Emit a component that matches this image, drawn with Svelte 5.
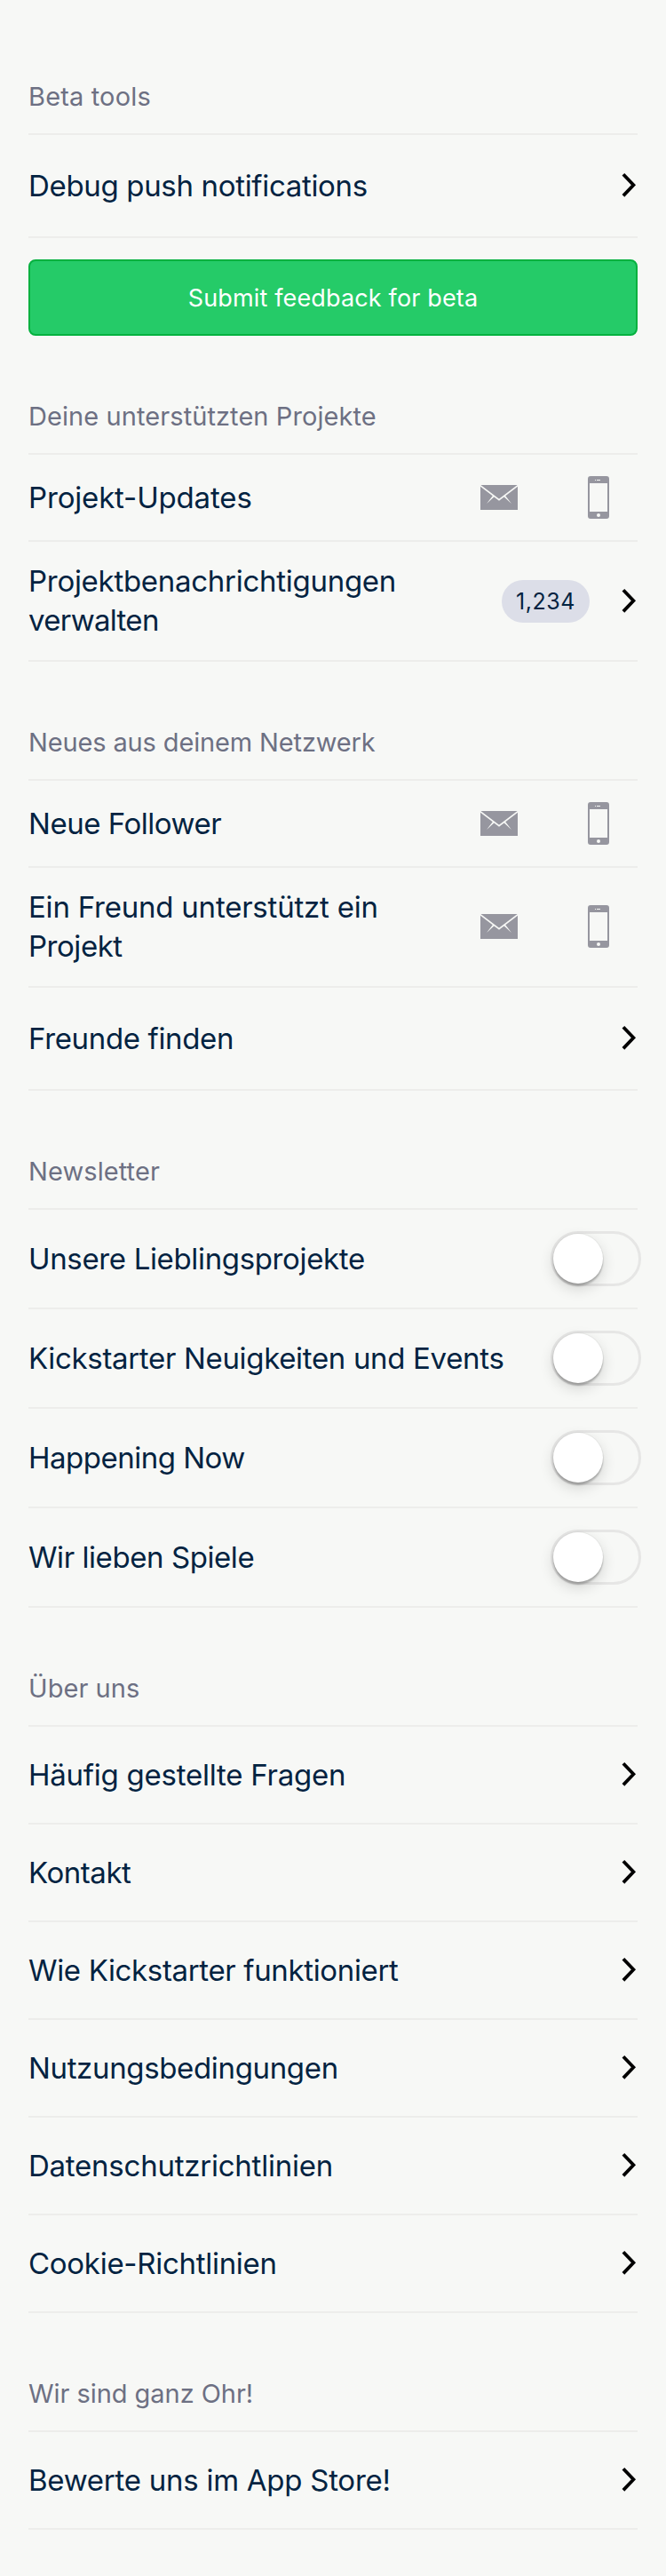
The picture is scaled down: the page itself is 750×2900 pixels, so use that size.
<script>
  // Each row carries its label lines as [text, letter spacing in px].
  const sections = [
    {
      title: ['Beta tools', 0.16],
      rows: [{ lines: [['Debug push notifications', -0.33]], kind: 'link', height: 116 }],
      button: 'Submit feedback for beta'
    },
    {
      title: ['Deine unterstützten Projekte', 0.08],
      rows: [
        { lines: [['Projekt-Updates', -0.16]], kind: 'channels', height: 98 },
        {
          lines: [['Projektbenachrichtigungen', -0.28], ['verwalten', -0.71]],
          kind: 'link',
          count: '1,234',
          height: 135
        }
      ]
    },
    {
      title: ['Neues aus deinem Netzwerk', -0.14],
      rows: [
        { lines: [['Neue Follower', -0.48]], kind: 'channels', height: 98 },
        {
          lines: [['Ein Freund unterstützt ein', -0.22], ['Projekt', -0.46]],
          kind: 'channels',
          height: 135
        },
        { lines: [['Freunde finden', -0.35]], kind: 'link', height: 116 }
      ]
    },
    {
      title: ['Newsletter', 0.09],
      rows: [
        { lines: [['Unsere Lieblingsprojekte', -0.35]], kind: 'toggle', height: 112 },
        { lines: [['Kickstarter Neuigkeiten und Events', -0.33]], kind: 'toggle', height: 112 },
        { lines: [['Happening Now', -0.5]], kind: 'toggle', height: 112 },
        { lines: [['Wir lieben Spiele', -0.43]], kind: 'toggle', height: 112 }
      ]
    },
    {
      title: ['Über uns', 0.06],
      rows: [
        { lines: [['Häufig gestellte Fragen', -0.24]], kind: 'link', height: 110 },
        { lines: [['Kontakt', -0.45]], kind: 'link', height: 110 },
        { lines: [['Wie Kickstarter funktioniert', -0.35]], kind: 'link', height: 110 },
        { lines: [['Nutzungsbedingungen', -0.35]], kind: 'link', height: 110 },
        { lines: [['Datenschutzrichtlinien', -0.24]], kind: 'link', height: 110 },
        { lines: [['Cookie-Richtlinien', -0.28]], kind: 'link', height: 110 }
      ]
    },
    {
      title: ['Wir sind ganz Ohr!', -0.05],
      rows: [{ lines: [['Bewerte uns im App Store!', -0.26]], kind: 'link', height: 110 }]
    }
  ];
</script>

<main class="settings">
  {#each sections as section}
    <section>
      <h2 style="letter-spacing: {section.title[1]}px">{section.title[0]}</h2>
      {#each section.rows as row}
        <div class="row" class:tall={row.lines.length > 1} style="height: {row.height}px">
          <div class="label">
            {#each row.lines as [text, spacing]}
              <div style="letter-spacing: {spacing}px">{text}</div>
            {/each}
          </div>
          {#if row.kind === 'channels'}
            <div class="channels">
              <svg width="42" height="28" viewBox="0 0 42 28" aria-hidden="true">
                <path fill="#96969f" d="M0 0h42v28H0z" />
                <path fill="none" stroke="#f7f8f6" stroke-width="1.7" d="M-.5 .4 21 16.6 42.5 .4" />
                <path fill="#f7f8f6" d="M14.3 11.5 7 21l9.4-8.600zM27.7 11.5 35 21l-9.400-8.600z" />
              </svg>
              <svg width="24" height="48" viewBox="0 0 24 48" aria-hidden="true">
                <path
                  fill="#96969f"
                  fill-rule="evenodd"
                  d="M3 0h18a3 3 0 0 1 3 3v42a3 3 0 0 1-3 3H3a3 3 0 0 1-3-3V3a3 3 0 0 1 3-3zM2 8v32h20V8z"
                />
                <circle cx="12" cy="44" r="2" fill="#f7f8f6" />
                <path fill="#f7f8f6" d="M8 4h1v1H8zM10 4h4v1h-4z" />
              </svg>
            </div>
          {:else if row.kind === 'toggle'}
            <div class="toggle"><span class="knob"></span></div>
          {:else}
            {#if row.count}<span class="badge">{row.count}</span>{/if}
            <svg class="chevron" width="17" height="29" viewBox="0 0 17 29" aria-hidden="true">
              <path d="M1.9 2.2 13.400 14.300 1.9 26.400" fill="none" stroke="#000" stroke-width="3.8" />
            </svg>
          {/if}
        </div>
      {/each}
      {#if section.button}
        <button type="button">{section.button}</button>
      {/if}
    </section>
  {/each}
</main>

<style>
  :global(body) {
    background: #f7f8f6;
  }

  .settings {
    box-sizing: border-box;
    height: 2900px;
    padding: 18px 32px 0;
    background: #f7f8f6;
    color: #032341;
    font-family: Inter, 'Liberation Sans', sans-serif;
  }

  h2 {
    display: flex;
    align-items: flex-end;
    box-sizing: border-box;
    height: 134px;
    margin: 0;
    padding-bottom: 23px;
    border-bottom: 2px solid #ededeb;
    color: #6d7083;
    font-size: 29px;
    font-weight: 400;
    line-height: 36px;
    white-space: nowrap;
  }

  .row {
    display: flex;
    align-items: center;
    box-sizing: border-box;
    border-bottom: 2px solid #ededeb;
  }

  .label {
    flex: 1;
    font-size: 33px;
    line-height: 44px;
    white-space: nowrap;
  }

  .tall .label {
    padding-bottom: 2px;
  }

  .channels {
    display: flex;
    align-items: center;
    gap: 79px;
    margin-right: 32px;
  }

  .tall .channels {
    padding-bottom: 1px;
  }

  .badge {
    display: flex;
    align-items: center;
    justify-content: center;
    width: 99px;
    height: 48px;
    margin-right: 36px;
    border-radius: 24px;
    background: #dcdee8;
    font-size: 25px;
    letter-spacing: 0.56px;
  }

  .chevron {
    margin: 0 1px 2px 0;
  }

  .tall .chevron {
    margin-bottom: 0;
  }

  .toggle {
    box-sizing: border-box;
    width: 102px;
    height: 62px;
    margin-right: -4px;
    border: 3px solid #e6e6e5;
    border-radius: 31px;
  }

  .knob {
    display: block;
    width: 56px;
    height: 56px;
    border-radius: 50%;
    background: #fff;
    box-shadow:
      0 0 0 1px rgba(0, 0, 0, 0.04),
      0 6px 16px rgba(0, 0, 0, 0.15),
      0 3px 2px rgba(0, 0, 0, 0.22);
  }

  button {
    display: flex;
    align-items: center;
    justify-content: center;
    box-sizing: border-box;
    width: 100%;
    height: 86px;
    margin: 24px 0 0;
    padding: 0;
    border: 2px solid #05b13f;
    border-radius: 8px;
    background: #25cb68;
    color: #fff;
    font: 400 27px Inter, 'Liberation Sans', sans-serif;
    letter-spacing: 0.15px;
  }
</style>
